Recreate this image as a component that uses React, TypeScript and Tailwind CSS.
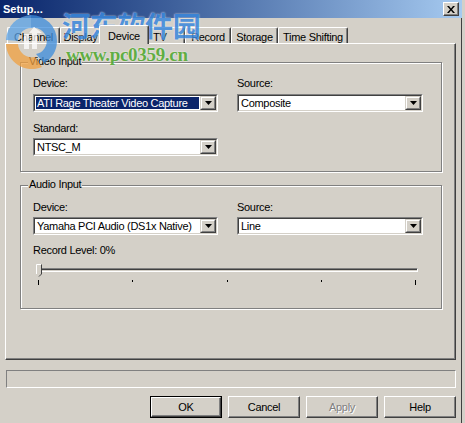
import React from "react";

const face = "font-['Liberation_Sans',Arial,sans-serif]";

function DropButton() {
  return (
    <div className="w-[16px] h-full border border-t-[#d4d0c8] border-l-[#d4d0c8] border-b-[#404040] border-r-[#404040] bg-[#d4d0c8]">
      <div className="w-full h-full border border-t-white border-l-white border-b-[#808080] border-r-[#808080] flex items-center justify-center">
        <svg width="7" height="4" viewBox="0 0 7 4">
          <path d="M0 0h7L3.5 4z" fill="#000" />
        </svg>
      </div>
    </div>
  );
}

function Combo({ value, width, selected }: { value: string; width: string; selected?: boolean }) {
  return (
    <div className={`h-[18px] border border-t-[#808080] border-l-[#808080] border-b-white border-r-white ${width}`}>
      <div className="h-full flex border border-t-[#404040] border-l-[#404040] border-b-[#d4d0c8] border-r-[#d4d0c8] bg-white">
        <div className="flex-1 flex p-px min-w-0">
          {selected ? (
            <span className="flex-1 flex items-center pl-px bg-[#0a246a] text-white whitespace-nowrap">{value}</span>
          ) : (
            <span className="flex items-center pl-px whitespace-nowrap">{value}</span>
          )}
        </div>
        <DropButton />
      </div>
    </div>
  );
}

function Label({ children, className = "" }: { children: React.ReactNode; className?: string }) {
  return <div className={`h-[13px] leading-[13px] whitespace-nowrap ${className}`}>{children}</div>;
}

function GroupBox({ title, className, children }: { title: string; className: string; children: React.ReactNode }) {
  return (
    <div className={`relative w-[422px] border border-[#808080] shadow-[inset_1px_1px_0_#fff,1px_1px_0_#fff] ${className}`}>
      <span className="absolute -top-[8px] left-[7px] px-px leading-[13px] bg-[#d4d0c8]">{title}</span>
      {children}
    </div>
  );
}

function Tab({ label, width, active, extra = "" }: { label: string; width: string; active?: boolean; extra?: string }) {
  if (active) {
    return (
      <div
        className={`relative z-10 -mx-[2px] -mb-px h-[19px] flex items-start pt-[2px] justify-center bg-[#d4d0c8] border-t border-l border-t-white border-l-white border-r border-r-[#404040] shadow-[inset_-1px_0_0_#808080] rounded-tl-[2px] rounded-tr-[2px] ${width}`}
      >
        {label}
      </div>
    );
  }
  return (
    <div
      className={`h-[16px] flex items-start pt-px bg-[#d4d0c8] border-t border-l border-t-white border-l-white border-r border-r-[#404040] shadow-[inset_-1px_0_0_#808080] rounded-tl-[2px] rounded-tr-[2px] ${extra || "justify-center"} ${width}`}
    >
      {label}
    </div>
  );
}

function Button({ children, primary, disabled }: { children: string; primary?: boolean; disabled?: boolean }) {
  if (primary) {
    return (
      <div className="w-[72px] h-[22px] border border-black">
        <div className="w-full h-full border border-t-white border-l-white border-b-[#404040] border-r-[#404040] shadow-[inset_-1px_-1px_0_#808080] flex items-center justify-center">
          {children}
        </div>
      </div>
    );
  }
  return (
    <div className="w-[72px] h-[22px] border border-t-white border-l-white border-b-[#404040] border-r-[#404040] shadow-[inset_-1px_-1px_0_#808080] flex items-center justify-center">
      <span className={disabled ? "text-[#808080] [text-shadow:1px_1px_0_#fff]" : ""}>{children}</span>
    </div>
  );
}

function Slider() {
  return (
    <div className="relative ml-[5px] mt-[11px] w-[380px] h-[18px]">
      <div className="h-[4px] border border-t-[#808080] border-l-[#808080] border-b-white border-r-white">
        <div className="h-full border-t border-[#404040]" />
      </div>
      <svg className="absolute -left-[2px] -top-[4px]" width="6" height="13" viewBox="0 0 6 13">
        <path d="M0.5 0.5H5.5V10L3 12.5L0.5 10Z" fill="#d4d0c8" />
        <path d="M0.5 10V0.5H5" stroke="#fff" fill="none" />
        <path d="M5.5 0.5V10L3 12.5" stroke="#404040" fill="none" />
      </svg>
      <div className="absolute left-0 top-[12px] w-[378px] flex justify-between items-start">
        <div className="w-px h-[5px] bg-black" />
        <div className="w-px h-[2px] bg-black" />
        <div className="w-px h-[2px] bg-black" />
        <div className="w-px h-[2px] bg-black" />
        <div className="w-px h-[5px] bg-black" />
      </div>
    </div>
  );
}

// semi-transparent site watermark lying over the top-left of the dialog
function Watermark() {
  return (
    <div className="absolute inset-0 pointer-events-none">
      <svg className="absolute left-[4px] top-[13px] opacity-75" width="56" height="58" viewBox="0 0 56 58">
        <path d="M27 2A26 26 0 0 1 53 28A26 26 0 0 1 40 50L32 41A13 13 0 0 0 27 15Z" fill="#3d8ddd" />
        <path d="M27 2A26 26 0 0 0 2 27L14 28A13 13 0 0 1 27 15Z" fill="#5aa2e6" />
        <path d="M2 31A26 26 0 0 0 38 54L31 44A14 14 0 0 1 14 31Z" fill="#f0a040" />
        <path d="M20 21h5v15h-5zM30 14l8 6h-5v16h-5V20h-3z" fill="#fff" />
      </svg>
      <div className="absolute left-[62px] top-[9px] text-[28px] leading-[32px] font-bold text-[#3b88dc] font-['Noto_Sans_CJK_SC',sans-serif] opacity-85 [text-shadow:0_0_2px_#fff]">
        河东软件园
      </div>
      <div className="absolute left-[66px] top-[44px] text-[19px] leading-[22px] font-bold text-[#55aa35] font-['Liberation_Serif',serif] opacity-90 [text-shadow:0_0_2px_#fff]">
        www.pc0359.cn
      </div>
    </div>
  );
}

export default function App() {
  return (
    <div
      className={`relative w-[465px] h-[423px] overflow-hidden bg-[#d4d0c8] text-black text-[11px] tracking-[-0.3px] ${face} shadow-[inset_-3px_0_0_#d4d0c8,inset_-4px_0_0_#404040]`}
    >
      <div className="w-[462px] h-[18px] flex items-center justify-between bg-linear-to-r from-[#0a246a] to-[#a6caf0] pl-[3px] pr-[3px]">
        <span className="font-bold text-white tracking-normal">Setup...</span>
        <div className="w-[16px] h-[14px] border border-t-white border-l-white border-b-[#404040] border-r-[#404040] bg-[#d4d0c8] shadow-[inset_-1px_-1px_0_#808080] flex items-center justify-center">
          <svg width="8" height="7" viewBox="0 0 8 7">
            <path d="M0 0h2l2 2.5L6 0h2L5 3.5L8 7H6L4 4.5L2 7H0l3-3.5z" fill="#000" />
          </svg>
        </div>
      </div>

      <div className="mt-[7px] ml-[7px] h-[18px] flex items-end">
        <Tab label="Channel" width="w-[53px]" />
        <Tab label="Display" width="w-[41px]" />
        <Tab label="Device" width="w-[50px]" active />
        <Tab label="TV" width="w-[38px]" extra="justify-start pl-[5px]" />
        <Tab label="Record" width="w-[46px]" />
        <Tab label="Storage" width="w-[47px]" />
        <Tab label="Time Shifting" width="w-[70px]" />
      </div>

      <div className="ml-[5px] w-[451px] h-[317px] border border-t-white border-l-white border-b-[#404040] border-r-[#404040] shadow-[inset_-1px_-1px_0_#808080] pt-[18px] pl-[14px]">
        <GroupBox title="Video Input" className="h-[110px] pt-[14px] pl-[12px]">
          <div className="flex gap-[19px]">
            <div className="flex flex-col">
              <Label>Device:</Label>
              <div className="mt-[4px]">
                <Combo value="ATI Rage Theater Video Capture" width="w-[185px]" selected />
              </div>
              <Label className="mt-[10px]">Standard:</Label>
              <div className="mt-[3px]">
                <Combo value="NTSC_M" width="w-[185px]" />
              </div>
            </div>
            <div className="flex flex-col">
              <Label>Source:</Label>
              <div className="mt-[4px]">
                <Combo value="Composite" width="w-[186px]" />
              </div>
            </div>
          </div>
        </GroupBox>

        <GroupBox title="Audio Input" className="mt-[13px] h-[124px] pt-[15px] pl-[12px]">
          <div className="flex gap-[19px]">
            <div className="flex flex-col">
              <Label>Device:</Label>
              <div className="mt-[3px]">
                <Combo value="Yamaha PCI Audio (DS1x Native)" width="w-[185px]" />
              </div>
            </div>
            <div className="flex flex-col">
              <Label>Source:</Label>
              <div className="mt-[3px]">
                <Combo value="Line" width="w-[186px]" />
              </div>
            </div>
          </div>
          <Label className="mt-[9px]">Record Level: 0%</Label>
          <Slider />
        </GroupBox>
      </div>

      <div className="mt-[10px] ml-[6px] w-[450px] h-[18px] border border-t-[#808080] border-l-[#808080] border-b-white border-r-white" />

      <div className="mt-[8px] pr-[9px] flex justify-end gap-[6px]">
        <Button primary>OK</Button>
        <Button>Cancel</Button>
        <Button disabled>Apply</Button>
        <Button>Help</Button>
      </div>

      <Watermark />
    </div>
  );
}
